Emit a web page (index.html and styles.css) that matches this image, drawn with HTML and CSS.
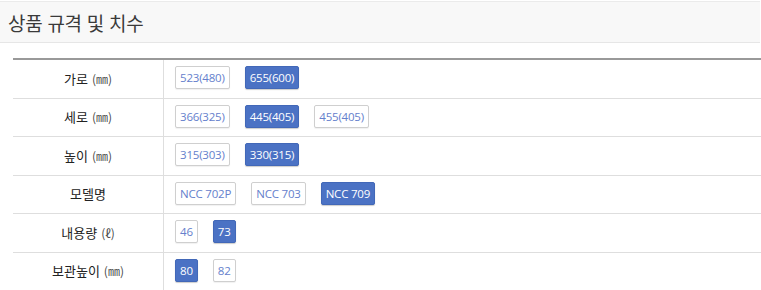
FILE: index.html
```html
<!DOCTYPE html>
<html lang="ko">
<head>
<meta charset="utf-8">
<link rel="stylesheet" href="styles.css">
</head>
<body>
<div class="header"><h2 class="title">상품 규격 및 치수</h2></div>
<div class="spec">
  <div class="row">
    <div class="label">가로 <span class="unit">(㎜)</span></div>
    <div class="opts"><span class="opt">523(480)</span><span class="opt on">655(600)</span></div>
  </div>
  <div class="row">
    <div class="label">세로 <span class="unit">(㎜)</span></div>
    <div class="opts"><span class="opt">366(325)</span><span class="opt on">445(405)</span><span class="opt">455(405)</span></div>
  </div>
  <div class="row">
    <div class="label">높이 <span class="unit">(㎜)</span></div>
    <div class="opts"><span class="opt">315(303)</span><span class="opt on">330(315)</span></div>
  </div>
  <div class="row">
    <div class="label">모델명</div>
    <div class="opts"><span class="opt">NCC 702P</span><span class="opt">NCC 703</span><span class="opt on">NCC 709</span></div>
  </div>
  <div class="row">
    <div class="label">내용량 <span class="unit">(ℓ)</span></div>
    <div class="opts"><span class="opt">46</span><span class="opt on">73</span></div>
  </div>
  <div class="row">
    <div class="label">보관높이 <span class="unit">(㎜)</span></div>
    <div class="opts"><span class="opt on">80</span><span class="opt">82</span></div>
  </div>
</div>
</body>
</html>
```
FILE: styles.css
```css
html, body {
  margin: 0;
  padding: 0;
  background: #fff;
  font-family: "Noto Sans CJK KR", "Noto Sans", sans-serif;
  color: #222;
}
.header {
  margin-top: 1px;
  width: 760px;
  height: 40px;
  box-sizing: content-box;
  background: #f8f8f8;
  border-top: 1px solid #ebebeb;
  border-bottom: 1px solid #e6e6e6;
  display: flex;
  align-items: center;
}
.title {
  margin: 0 0 0 8px;
  font-size: 19px;
  font-weight: normal;
  color: #3a3a3a;
  letter-spacing: -0.3px;
}
.spec {
  margin: 15px 0 0 13px;
  border-top: 2px solid #999;
}
.row {
  display: flex;
  height: 38.5px;
  box-sizing: border-box;
  border-bottom: 1px solid #dedede;
}
.label {
  width: 151px;
  border-right: 1px solid #dedede;
  display: flex;
  align-items: center;
  justify-content: center;
  font-size: 13px;
  color: #222;
  gap: 4px;
  padding-bottom: 1px;
  box-sizing: border-box;
}
.unit {
  font-size: 12px;
  color: #4a4a4a;
}
.opts {
  display: flex;
  align-items: flex-start;
  gap: 15px;
  padding: 6px 0 0 11px;
}
.opt {
  display: inline-flex;
  align-items: center;
  height: 23px;
  box-sizing: border-box;
  padding: 0 4px;
  border: 1px solid #cfcfcf;
  border-radius: 2px;
  font-family: "Open Sans", "Noto Sans CJK KR", sans-serif;
  font-size: 11.5px;
  letter-spacing: -0.2px;
  color: #6580cc;
  background: #fff;
  box-shadow: 0 1px 1px rgba(0,0,0,0.06);
}
.opt.on {
  background: #4b72c4;
  border-color: #4268b8;
  color: #fff;
  box-shadow: 0 1px 1px rgba(0,0,0,0.2);
}
```
